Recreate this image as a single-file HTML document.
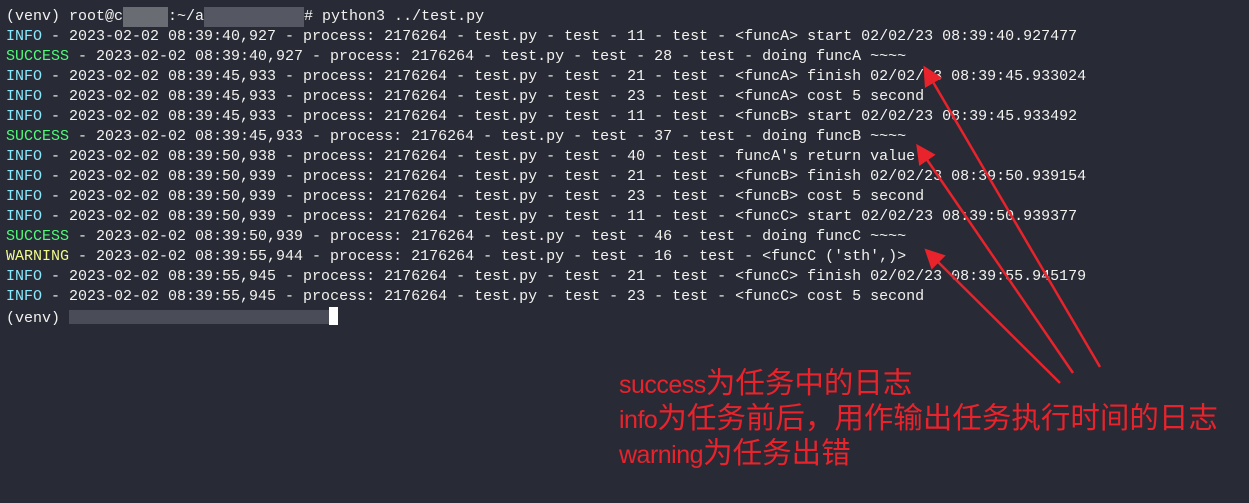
<!DOCTYPE html>
<html><head><meta charset="utf-8"><style>
html,body{margin:0;padding:0;}
body{width:1249px;height:503px;background:#282a36;position:relative;overflow:hidden;}
pre{margin:0;position:absolute;left:6px;top:7px;font-family:"Liberation Mono",monospace;font-size:15px;line-height:20px;color:#f2f2ee;}
.i{color:#8be9fd}.s{color:#50fa7b}.w{color:#f1fa8c}
.blur{display:inline-block;background:#5a5c68;height:20px;vertical-align:top;}
.ann{position:absolute;left:619px;top:364px;font-family:"Noto Sans CJK SC",sans-serif;font-size:29.5px;color:#e8232b;white-space:nowrap;}
.ann div{height:35px;line-height:35px;overflow:visible;}
.ann b{font-weight:normal;font-family:"Liberation Sans",sans-serif;font-size:25px;letter-spacing:-0.5px;line-height:35px;}
.cur{display:inline-block;width:9px;height:18px;background:#fff;vertical-align:-3px;}
</style></head><body>
<pre>(venv) root@c<span class="blur" style="width:45px;background:#6a6c74"></span>:~/a<span class="blur" style="width:100px;background:#555762"></span># python3 ../test.py
<span class="i">INFO</span> - 2023-02-02 08:39:40,927 - process: 2176264 - test.py - test - 11 - test - &lt;funcA&gt; start 02/02/23 08:39:40.927477
<span class="s">SUCCESS</span> - 2023-02-02 08:39:40,927 - process: 2176264 - test.py - test - 28 - test - doing funcA ~~~~
<span class="i">INFO</span> - 2023-02-02 08:39:45,933 - process: 2176264 - test.py - test - 21 - test - &lt;funcA&gt; finish 02/02/23 08:39:45.933024
<span class="i">INFO</span> - 2023-02-02 08:39:45,933 - process: 2176264 - test.py - test - 23 - test - &lt;funcA&gt; cost 5 second
<span class="i">INFO</span> - 2023-02-02 08:39:45,933 - process: 2176264 - test.py - test - 11 - test - &lt;funcB&gt; start 02/02/23 08:39:45.933492
<span class="s">SUCCESS</span> - 2023-02-02 08:39:45,933 - process: 2176264 - test.py - test - 37 - test - doing funcB ~~~~
<span class="i">INFO</span> - 2023-02-02 08:39:50,938 - process: 2176264 - test.py - test - 40 - test - funcA's return value
<span class="i">INFO</span> - 2023-02-02 08:39:50,939 - process: 2176264 - test.py - test - 21 - test - &lt;funcB&gt; finish 02/02/23 08:39:50.939154
<span class="i">INFO</span> - 2023-02-02 08:39:50,939 - process: 2176264 - test.py - test - 23 - test - &lt;funcB&gt; cost 5 second
<span class="i">INFO</span> - 2023-02-02 08:39:50,939 - process: 2176264 - test.py - test - 11 - test - &lt;funcC&gt; start 02/02/23 08:39:50.939377
<span class="s">SUCCESS</span> - 2023-02-02 08:39:50,939 - process: 2176264 - test.py - test - 46 - test - doing funcC ~~~~
<span class="w">WARNING</span> - 2023-02-02 08:39:55,944 - process: 2176264 - test.py - test - 16 - test - &lt;funcC ('sth',)&gt;
<span class="i">INFO</span> - 2023-02-02 08:39:55,945 - process: 2176264 - test.py - test - 21 - test - &lt;funcC&gt; finish 02/02/23 08:39:55.945179
<span class="i">INFO</span> - 2023-02-02 08:39:55,945 - process: 2176264 - test.py - test - 23 - test - &lt;funcC&gt; cost 5 second
(venv) <span class="blur" style="width:260px;height:14px;margin-top:3px;background:#4a4c58"></span><span class="cur"></span></pre>
<svg width="1249" height="503" style="position:absolute;left:0;top:0">
<defs><marker id="a" markerWidth="8" markerHeight="8" refX="6" refY="4" orient="auto" markerUnits="strokeWidth"><path d="M0,0 L8,4 L0,8 Z" fill="#e8232b"/></marker></defs>
<g stroke="#e8232b" stroke-width="2.5" fill="none">
<line x1="1100" y1="367" x2="926" y2="70" marker-end="url(#a)"/>
<line x1="1073" y1="373" x2="919" y2="148" marker-end="url(#a)"/>
<line x1="1060" y1="383" x2="928" y2="252" marker-end="url(#a)"/>
</g></svg>
<div class="ann"><div><b>success</b>为任务中的日志</div><div><b>info</b>为任务前后，用作输出任务执行时间的日志</div><div><b>warning</b>为任务出错</div></div>
</body></html>
